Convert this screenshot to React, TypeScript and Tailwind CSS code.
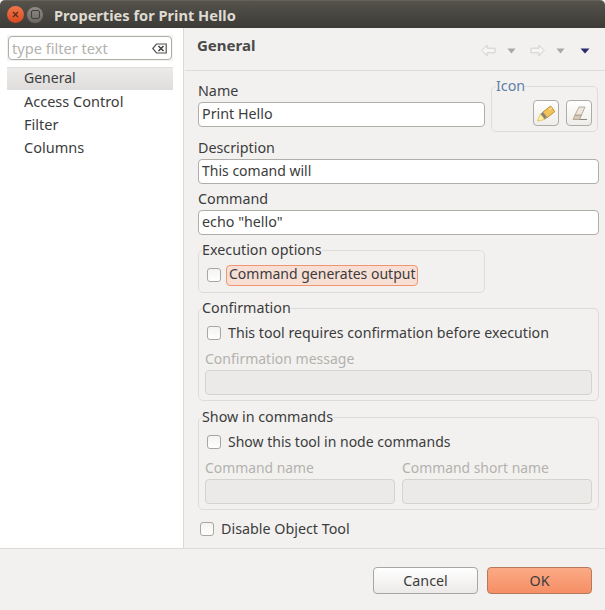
import React from "react";

const font = { fontFamily: '"Noto Sans", sans-serif' };

function Check({ label, highlight, textClass = "" }: { label: string; highlight?: boolean; textClass?: string }) {
  return (
    <label className="flex items-center h-[18px]">
      <input type="checkbox" className="appearance-none w-[14px] h-[14px] shrink-0 rounded-[3px] border border-[#a9a69f] bg-gradient-to-b from-[#f4f3f2] to-white" />
      {highlight ? (
        <span className={`ml-[5px] h-[21px] w-[192px] flex items-center pl-[2px] pb-[2px] rounded-[4px] border border-[#f0956f] bg-[#f7dfd5] whitespace-nowrap ${textClass}`}>{label}</span>
      ) : (
        <span className={`ml-[7px] leading-[18px] whitespace-nowrap ${textClass}`}>{label}</span>
      )}
    </label>
  );
}

function TextBox({ value, className = "" }: { value: string; className?: string }) {
  return (
    <div className={`h-[25px] rounded-[4px] border border-[#b0aea8] bg-white flex items-center pl-[3px] pb-[2px] text-[#3c3c3c] ${className}`}>
      {value}
    </div>
  );
}

function DisabledBox({ className = "" }: { className?: string }) {
  return <div className={`h-[25px] rounded-[4px] border border-[#d5d3ce] bg-[#ebeae8] ${className}`} />;
}

function Group({ title, className = "", legendClass = "ml-[3px]", children }: { title: string; className?: string; legendClass?: string; children: React.ReactNode }) {
  return (
    <fieldset className={`border border-[#dedcd8] rounded-[5px] min-w-0 ${className}`}>
      <legend className={`h-[18px] leading-[18px] whitespace-nowrap ${legendClass}`}>{title}</legend>
      {children}
    </fieldset>
  );
}

function Tri({ color, wide }: { color: string; wide?: boolean }) {
  return (
    <svg width={wide ? 10 : 9} height="6" viewBox={wide ? "0 0 10 6" : "0 0 9 6"}>
      <path d={wide ? "M0.5 0.5h9L5 5.5z" : "M0.5 0.5h8L4.5 5.5z"} fill={color} />
    </svg>
  );
}

function Arrow({ flip }: { flip?: boolean }) {
  return (
    <svg width="15" height="13" viewBox="0 0 15 13" style={flip ? { transform: "scaleX(-1)" } : undefined}>
      <path d="M0.8 6.5 6 1.2v3h8v4.6H6v3z" fill="#f6f5f4" stroke="#d0cfcc" strokeWidth="1" />
    </svg>
  );
}

export default function App() {
  return (
    <div style={font} className="w-[605px] h-[610px] flex flex-col bg-[#f2f1f0] text-[14.3px] leading-[16px] text-[#3c3c3c] overflow-hidden">
      <div className="h-[28px] shrink-0 flex items-center rounded-t-[5px] bg-gradient-to-b from-[#55524b] to-[#3c3b37] border-t border-[#64625b]">
        <div className="ml-[7px] w-[17px] h-[17px] rounded-full bg-gradient-to-b from-[#f0764a] to-[#d9481f] flex items-center justify-center">
          <svg width="7" height="7" viewBox="0 0 7 7"><path d="M1 1l5 5M6 1l-5 5" stroke="#5a2a18" strokeWidth="1.2" /></svg>
        </div>
        <div className="ml-[3px] w-[16px] h-[16px] rounded-full bg-gradient-to-b from-[#8d8b84] to-[#6a6861] flex items-center justify-center">
          <div className="w-[9px] h-[9px] rounded-[2px] border border-[#3f3e39]" />
        </div>
        <div className="ml-[11px] font-bold text-[14.6px] text-[#dfdbd2] whitespace-nowrap">Properties for Print Hello</div>
      </div>

      <div className="flex-1 flex min-h-0">
        <div className="w-[183px] shrink-0 bg-white text-[14.5px]">
          <div className="bg-[#f2f1f0] w-[166px] ml-[7px] mt-[7px] p-[1px] h-[26px]">
            <div className="h-[24px] rounded-[4px] border border-[#b0aea8] bg-white flex items-center justify-between pl-[3px] pr-[4px] text-[#b3b1ad]">
              <span className="whitespace-nowrap leading-[18px] text-[14.6px]">type filter text</span>
              <svg width="15" height="11" viewBox="0 0 15 11"><path d="M0.8 5.5 4.5 1h9.7v9H4.5z" fill="#fff" stroke="#55534f" strokeWidth="1.2" /><path d="M6.5 3l5 5M11.5 3l-5 5" stroke="#45433f" strokeWidth="1.6" /></svg>
            </div>
          </div>
          <div className="mt-[6px] w-[166px] ml-[7px] h-[23px] flex items-center pl-[17px] pb-[2px] border-t border-[#dfdedc] bg-gradient-to-b from-[#ecebe9] to-[#dedddb] text-[14px]">General</div>
          {["Access Control", "Filter", "Columns"].map((t) => (
            <div key={t} className="ml-[7px] h-[23px] flex items-center pl-[17px] pb-[2px]">{t}</div>
          ))}
        </div>
        <div className="w-[1px] bg-[#dbd9d5] shrink-0" />
        <div className="flex-1 min-w-0 ml-[1px] flex flex-col">
          <div className="h-[43px] shrink-0 border-b border-[#dedcd8] flex items-start pt-[9px] pl-[12px] pr-[15px] justify-between">
            <div className="font-bold text-[15px] text-[#4a4a48]">General</div>
            <div className="flex items-center mt-[7px]">
              <Arrow />
              <span className="ml-[11px] flex"><Tri color="#a8a7a4" /></span>
              <span className="ml-[14px] flex"><Arrow flip /></span>
              <span className="ml-[11px] flex"><Tri color="#a8a7a4" /></span>
              <span className="ml-[15px] flex"><Tri color="#2b2a6a" wide /></span>
            </div>
          </div>

          <div className="pl-[13px] pr-[6px]">
            <div className="flex">
              <div className="w-[287px] pt-[11px]">
                <div className="h-[20px] leading-[18px]">Name</div>
                <TextBox value="Print Hello" />
              </div>
              <Group title="Icon" className="ml-[6px] w-[107px] h-[55px] mt-[6px]" legendClass="text-[#5e7fa6] ml-[4px]">
                <div className="flex justify-end gap-[7px] pr-[5px] pt-[5px]">
                  <button className="w-[26px] h-[26px] rounded-[4px] border border-[#aeaca6] bg-gradient-to-b from-white to-[#eeedeb] flex items-center justify-center">
                    <svg width="18" height="18" viewBox="0 0 18 18">
                      <path d="M5.8 8.1 13.7 2l4.2 5.6-7.9 6.1z" fill="#f2c25a" stroke="#b57f1c" strokeWidth="0.8" />
                      <path d="M3.4 9.9 5.8 8.1 10 13.7 7.6 15.5z" fill="#85837f" />
                      <path d="M0.5 17 3.4 9.9 7.6 15.5z" fill="#fdf3a8" stroke="#e0b83e" strokeWidth="0.7" />
                      <path d="M12 6l3-2.2" stroke="#fff3c8" strokeWidth="1" />
                    </svg>
                  </button>
                  <button className="w-[26px] h-[26px] rounded-[4px] border border-[#aeaca6] bg-gradient-to-b from-white to-[#eeedeb] flex items-center justify-center">
                    <svg width="18" height="18" viewBox="0 0 18 18">
                      <path d="M3 15.5 5 11l6.5 0-2 4.5z" fill="#d8c8b4" stroke="#a89a88" strokeWidth="0.8" />
                      <path d="M5 11 9 3h6l-3.5 8z" fill="#ede7de" stroke="#a89a88" strokeWidth="0.8" />
                      <path d="M9.5 15.5H17" stroke="#8a8780" strokeWidth="1" />
                    </svg>
                  </button>
                </div>
              </Group>
            </div>

            <div className="mt-[7px] h-[20px] leading-[18px]">Description</div>
            <TextBox value="This comand will" className="w-[401px] text-[14px]" />
            <div className="mt-[6px] h-[20px] leading-[18px]">Command</div>
            <TextBox value='echo "hello"' className="w-[401px]" />

            <Group title="Execution options" className="mt-[6px] w-[287px] pb-[8px]">
              <div className="pl-[8px] pt-[7px]"><Check label="Command generates output" highlight textClass="text-[14px]" /></div>
            </Group>

            <Group title="Confirmation" className="mt-[6px] w-[401px] h-[102px]">
              <div className="pl-[8px] pt-[7px]"><Check label="This tool requires confirmation before execution" textClass="text-[14.2px]" /></div>
              <div className="pl-[6px] pt-[8px] h-[28px] leading-[18px] text-[#b3b1ad] text-[14px]">Confirmation message</div>
              <DisabledBox className="ml-[6px] w-[387px]" />
            </Group>

            <Group title="Show in commands" className="mt-[7px] w-[401px] h-[102px]">
              <div className="pl-[8px] pt-[7px]"><Check label="Show this tool in node commands" textClass="text-[14px]" /></div>
              <div className="flex pl-[6px] gap-[7px]">
                <div className="w-[190px]">
                  <div className="pt-[8px] h-[28px] leading-[18px] text-[#b3b1ad] text-[13.9px] whitespace-nowrap">Command name</div>
                  <DisabledBox />
                </div>
                <div className="w-[190px]">
                  <div className="pt-[8px] h-[28px] leading-[18px] text-[#b3b1ad] text-[13.9px] whitespace-nowrap">Command short name</div>
                  <DisabledBox />
                </div>
              </div>
            </Group>

            <div className="mt-[10px] ml-[2px]"><Check label="Disable Object Tool" /></div>
          </div>
        </div>
      </div>

      <div className="h-[62px] shrink-0 border-t border-[#dedcd8] flex justify-end gap-[9px] pr-[13px] pt-[18px]">
        <button className="w-[105px] h-[27px] rounded-[4px] border border-[#a8a6a0] bg-gradient-to-b from-white to-[#eceae8] text-[#3c3c3c] leading-[18px]">Cancel</button>
        <button className="w-[105px] h-[27px] rounded-[4px] border border-[#b5795c] bg-gradient-to-b from-[#fbaa85] to-[#f58e66] text-[#3c3c3c] leading-[18px]">OK</button>
      </div>
    </div>
  );
}
